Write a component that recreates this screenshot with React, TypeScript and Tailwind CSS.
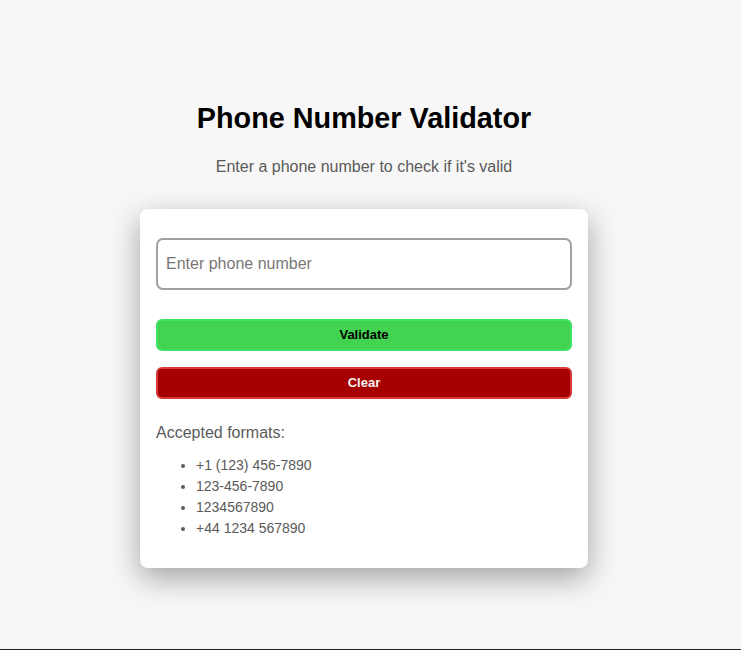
export default function App() {
  const formats = ['+1 (123) 456-7890', '123-456-7890', '1234567890', '+44 1234 567890'];

  return (
    <div className="min-h-[650px] bg-[#f7f7f7] flex flex-col items-center pr-[13px] font-['Liberation_Sans',Arial,sans-serif] border-b border-[#222]">
      <h1 className="mt-[100px] text-[28.8px] leading-[36px] font-bold text-black">Phone Number Validator</h1>
      <p className="mt-[21px] text-[16px] leading-[20px] text-[#5a5a5a]">Enter a phone number to check if it's valid</p>

      <div className="mt-[32px] w-[448px] bg-white rounded-[8px] shadow-[0_10px_30px_rgba(0,0,0,0.35)] px-4 pt-[29px] pb-[29px]">
        <input
          type="text"
          placeholder="Enter phone number"
          className="w-full h-[52px] px-[8px] border-2 border-[#a0a0a0] rounded-[7px] text-[16px] text-[#333] placeholder:text-[#777] outline-none"
        />

        <button className="mt-[29px] w-full h-[32px] bg-[#42d451] border-2 border-[#3fe264] rounded-[6px] text-[13px] font-bold text-black">
          Validate
        </button>
        <button className="mt-[16px] w-full h-[32px] bg-[#a70000] border-2 border-[#d63b3b] rounded-[6px] text-[13px] font-bold text-[#f3f3f3]">
          Clear
        </button>

        <p className="mt-[24px] text-[16px] leading-[20px] text-[#5a5a5a]">Accepted formats:</p>
        <ul className="mt-[12px] list-disc pl-[40px] text-[14px] leading-[21px] text-[#5a5a5a] marker:text-[#5a5a5a]">
          {formats.map((f) => (
            <li key={f}>{f}</li>
          ))}
        </ul>
      </div>
    </div>
  );
}
